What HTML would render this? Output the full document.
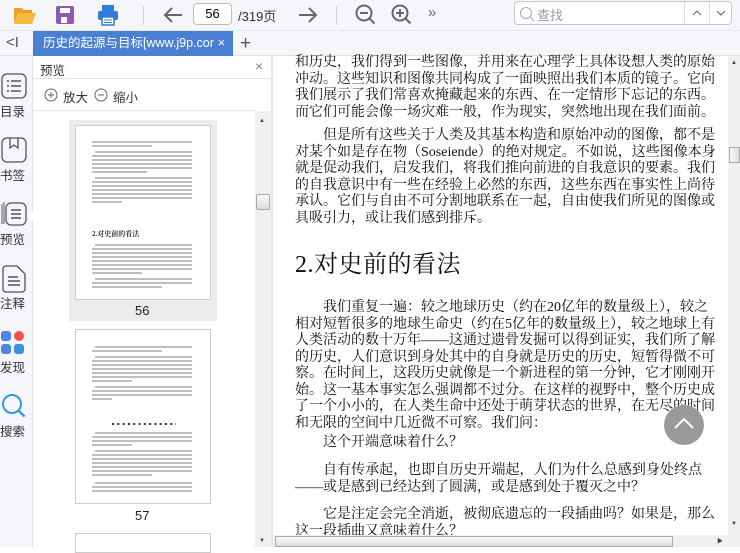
<!DOCTYPE html>
<html><head><meta charset="utf-8"><style>
*{margin:0;padding:0;box-sizing:border-box}
body{width:740px;height:547px;overflow:hidden;background:#fff;font-family:"Liberation Sans","Noto Sans CJK SC",sans-serif;position:relative}
.abs{position:absolute}
.tb{left:0;top:0;width:740px;height:31px;background:#f4f6f9;border-bottom:1px solid #e3e6ea}
.tabbar{left:0;top:31px;width:740px;height:25px;background:#f4f6f9;border-bottom:1px solid #dde0e4}
.tab{left:33px;top:31px;width:200px;height:25px;background:#4a80d4;color:#fff;font-size:12.5px;line-height:25px;padding-left:10px;white-space:nowrap;overflow:hidden}
.side{left:0;top:56px;width:33px;height:491px;background:#f4f6f9;border-right:1px solid #dcdfe3}
.prev{left:33px;top:56px;width:238px;height:491px;background:#fff}
.doc{font-family:"Liberation Serif","Noto Serif CJK SC",serif;font-size:14px;color:#111;position:absolute;left:295px;width:407px}
.l{height:16.5px;line-height:16.5px;white-space:nowrap;text-align:justify;text-align-last:justify}
.n{text-align-last:left}
.thumb{position:absolute;background:#fff;border:1px solid #ccc}
</style></head><body>
<div class="abs tb"></div>
<svg class="abs" style="left:13px;top:5px" width="24" height="20"><path d="M1 3h8l2 2h8v3H5L1 18z" fill="#e8a22b"/><path d="M5 8h18l-4 11H1z" fill="#f5b93b"/></svg>
<svg class="abs" style="left:55px;top:5px" width="20" height="20"><rect x="1" y="1" width="18" height="18" rx="2" fill="#8d5bb5"/><rect x="5" y="3" width="10" height="5" fill="#fff"/><rect x="6" y="12" width="6" height="6" fill="#fff"/></svg>
<svg class="abs" style="left:97px;top:4px" width="22" height="22"><rect x="5" y="1" width="12" height="6" fill="#2f7fd6"/><rect x="1" y="7" width="20" height="9" rx="2" fill="#2f7fd6"/><rect x="5" y="13" width="12" height="8" fill="#fff" stroke="#2f7fd6" stroke-width="1.5"/><line x1="7" y1="16" x2="15" y2="16" stroke="#2f7fd6"/><line x1="7" y1="18.5" x2="15" y2="18.5" stroke="#2f7fd6"/></svg>
<div class="abs" style="left:143px;top:6px;width:1px;height:19px;background:#d0d3d8"></div>
<svg class="abs" style="left:162px;top:5px" width="22" height="20"><path d="M20 10H3M10 3L3 10l7 7" stroke="#666" stroke-width="2" fill="none"/></svg>
<div class="abs" style="left:193px;top:3px;width:39px;height:22px;border:1px solid #bbb;border-radius:4px;background:#fff;font-size:13px;text-align:center;line-height:20px">56</div>
<div class="abs" style="left:238px;top:6px;font-size:13px;color:#333">/319页</div>
<svg class="abs" style="left:297px;top:5px" width="22" height="20"><path d="M2 10h17M12 3l7 7-7 7" stroke="#666" stroke-width="2" fill="none"/></svg>
<div class="abs" style="left:336px;top:6px;width:1px;height:19px;background:#d0d3d8"></div>
<svg class="abs" style="left:354px;top:3px" width="22" height="22"><circle cx="10" cy="10" r="7.5" stroke="#666" stroke-width="2" fill="none"/><path d="M6 10h8M15.5 15.5l5 5" stroke="#666" stroke-width="2"/></svg>
<svg class="abs" style="left:390px;top:3px" width="22" height="22"><circle cx="10" cy="10" r="7.5" stroke="#666" stroke-width="2" fill="none"/><path d="M6 10h8M10 6v8M15.5 15.5l5 5" stroke="#666" stroke-width="2"/></svg>
<div class="abs" style="left:428px;top:4px;font-size:15px;color:#666">»</div>
<div class="abs" style="left:514px;top:1px;width:218px;height:24px;border:1px solid #c4c8ce;border-radius:4px;background:#fff"></div>
<svg class="abs" style="left:519px;top:6px" width="16" height="16"><circle cx="7" cy="7" r="5.5" stroke="#aaa" fill="none"/><path d="M11 11l4 4" stroke="#aaa"/></svg>
<div class="abs" style="left:537px;top:5px;font-size:13px;color:#999">查找</div>
<div class="abs" style="left:684px;top:2px;width:1px;height:22px;background:#ddd"></div>
<div class="abs" style="left:709px;top:2px;width:1px;height:22px;background:#ddd"></div>
<svg class="abs" style="left:691px;top:9px" width="12" height="8"><path d="M2 6l4-4 4 4" stroke="#666" fill="none"/></svg>
<svg class="abs" style="left:715px;top:9px" width="12" height="8"><path d="M2 2l4 4 4-4" stroke="#666" fill="none"/></svg>

<div class="abs tabbar"></div>
<div class="abs" style="left:6px;top:34px;font-size:15px;color:#555">&lt;I</div>
<div class="abs tab">历史的起源与目标[www.j9p.cor <span style="position:absolute;right:8px">×</span></div>
<div class="abs" style="left:240px;top:31px;font-size:19px;color:#555;line-height:25px">+</div>

<div class="abs side"></div>
<svg class="abs" style="left:1px;top:73px" width="26" height="26"><rect x="1" y="1" width="24" height="24" rx="5" stroke="#555" stroke-width="1.3" fill="none"/><path d="M6 8h2M10 8h10M6 13h2M10 13h10M6 18h2M10 18h10" stroke="#555" stroke-width="1.5"/></svg>
<div class="abs" style="left:0;top:101px;font-size:12.5px;color:#333">目录</div>
<svg class="abs" style="left:1px;top:137px" width="26" height="26"><rect x="1" y="1" width="24" height="24" rx="5" stroke="#555" stroke-width="1.3" fill="none"/><path d="M9 1v10l4-3 4 3V1" stroke="#555" stroke-width="1.3" fill="none"/></svg>
<div class="abs" style="left:0;top:165px;font-size:12.5px;color:#333">书签</div>
<svg class="abs" style="left:1px;top:200px" width="28" height="28"><path d="M1 4v20M3 2v22" stroke="#555" fill="none"/><rect x="5" y="3" width="20" height="22" rx="5" stroke="#555" stroke-width="1.3" fill="none"/><path d="M10 10h10M10 14h10M10 18h10" stroke="#555" stroke-width="1.4"/></svg>
<div class="abs" style="left:0;top:229px;font-size:12.5px;color:#333">预览</div>
<div class="abs" style="left:27px;top:210px;width:0;height:0;border-top:6px solid transparent;border-bottom:6px solid transparent;border-right:6px solid #fff"></div>
<svg class="abs" style="left:1px;top:265px" width="26" height="28"><path d="M2 4a3 3 0 013-3h11l8 8v15a3 3 0 01-3 3H5a3 3 0 01-3-3z" stroke="#555" stroke-width="1.3" fill="none"/><path d="M7 12h10M7 16h12M7 20h12" stroke="#555" stroke-width="1.4"/></svg>
<div class="abs" style="left:0;top:293px;font-size:12.5px;color:#333">注释</div>
<div class="abs" style="left:1px;top:331px;width:10px;height:10px;border-radius:3px;background:#4a86e8"></div>
<div class="abs" style="left:14px;top:331px;width:10px;height:10px;border-radius:5px;background:#f0504f"></div>
<div class="abs" style="left:1px;top:344px;width:10px;height:10px;border-radius:3px;background:#4a86e8"></div>
<div class="abs" style="left:14px;top:344px;width:10px;height:10px;border-radius:3px;background:#3d8ee8"></div>
<div class="abs" style="left:0;top:357px;font-size:12.5px;color:#333">发现</div>
<svg class="abs" style="left:1px;top:393px" width="26" height="26"><circle cx="11" cy="11" r="9" stroke="#2f9be0" stroke-width="2" fill="none"/><path d="M17.5 17.5l6 6" stroke="#2f9be0" stroke-width="2.4"/></svg>
<div class="abs" style="left:0;top:421px;font-size:12.5px;color:#333">搜索</div>

<div class="abs prev"></div>
<div class="abs" style="left:40px;top:60px;font-size:12.5px;color:#333">预览</div>
<div class="abs" style="left:255px;top:58px;font-size:14px;color:#888">×</div>
<div class="abs" style="left:33px;top:78px;width:238px;height:1px;background:#e5e5e5"></div>
<svg class="abs" style="left:44px;top:88px" width="14" height="14"><circle cx="7" cy="7" r="6" stroke="#666" fill="none"/><path d="M4 7h6M7 4v6" stroke="#666"/></svg>
<div class="abs" style="left:63px;top:87px;font-size:12.5px;color:#333">放大</div>
<svg class="abs" style="left:94px;top:88px" width="14" height="14"><circle cx="7" cy="7" r="6" stroke="#666" fill="none"/><path d="M4 7h6" stroke="#666"/></svg>
<div class="abs" style="left:113px;top:87px;font-size:12.5px;color:#333">缩小</div>
<div class="abs" style="left:33px;top:110px;width:222px;height:1px;background:#e8e8e8"></div>
<div class="abs" style="left:69px;top:120px;width:148px;height:201px;background:#ececec"></div>
<div class="thumb" style="left:75px;top:125px;width:136px;height:175px"></div>
<div class="abs" style="left:135px;top:303px;font-size:13px;color:#222">56</div>
<div class="thumb" style="left:75px;top:329px;width:136px;height:175px"></div>
<div class="abs" style="left:135px;top:508px;font-size:13px;color:#222">57</div>
<div class="thumb" style="left:75px;top:533px;width:136px;height:20px"></div>
<svg class="abs" style="left:92px;top:140px" width="104" height="160">
<g stroke="#aaa" stroke-width="1.6">
<path d="M0 2h100M0 6h60M3 12h97M0 16h100M0 20h100M0 24h100M0 28h100M0 32h55M3 38h97M0 42h100M0 46h100M0 50h100M0 54h100M0 58h100M0 62h30M3 105h97M0 109h100M0 113h100M0 117h100M0 121h100M0 125h100M0 129h100M0 133h50M3 139h97M0 143h100M0 147h70"/>
</g>
<text x="0" y="96" font-size="7" font-family="Liberation Serif,Noto Serif CJK SC,serif" font-weight="bold" fill="#333">2.对史前的看法</text>
</svg>
<svg class="abs" style="left:92px;top:345px" width="104" height="155">
<g stroke="#aaa" stroke-width="1.6"><path d="M3 2h97M0 6h70M3 12h97M0 16h100M0 20h100M0 24h100M0 28h100M0 32h100M0 36h40M3 42h97M0 46h100M0 50h100M0 54h20M3 88h97M0 92h100M0 96h100M0 100h40M3 106h97M0 110h100M0 114h100M0 118h100M0 122h100M0 126h100M0 130h60M3 138h97M0 142h100M0 146h100"/></g>
<path d="M20 79h64" stroke="#333" stroke-width="2" stroke-dasharray="2 3.3"/>
</svg>
<div class="abs" style="left:255px;top:111px;width:16px;height:436px;background:#f0f0f0"></div>
<div class="abs" style="left:259px;top:118px;font-size:6px;color:#444">▲</div>
<div class="abs" style="left:256px;top:194px;width:14px;height:16px;border:1px solid #aaa;border-radius:2px;background:linear-gradient(#fafafa,#ddd)"></div>
<div class="abs" style="left:259px;top:538px;font-size:6px;color:#444">▼</div>
<div class="abs" style="left:271px;top:56px;width:2px;height:491px;background:#e6e6e6"></div>

<div class="doc" style="top:55px">
<div class="l">和历史，我们得到一些图像，并用来在心理学上具体设想人类的原始</div>
<div class="l">冲动。这些知识和图像共同构成了一面映照出我们本质的镜子。它向</div>
<div class="l">我们展示了我们常喜欢掩藏起来的东西、在一定情形下忘记的东西。</div>
<div class="l n">而它们可能会像一场灾难一般，作为现实，突然地出现在我们面前。</div>
</div>
<div class="doc" style="top:128px">
<div class="l" style="padding-left:28px">但是所有这些关于人类及其基本构造和原始冲动的图像，都不是</div>
<div class="l">对某个如是存在物（Soseiende）的绝对规定。不如说，这些图像本身</div>
<div class="l">就是促动我们，启发我们，将我们推向前进的自我意识的要素。我们</div>
<div class="l">的自我意识中有一些在经验上必然的东西，这些东西在事实性上尚待</div>
<div class="l">承认。它们与自由不可分割地联系在一起，自由使我们所见的图像或</div>
<div class="l n">具吸引力，或让我们感到排斥。</div>
</div>
<div class="abs" style="left:295px;top:244px;font-family:'Liberation Serif','Noto Serif CJK SC',serif;font-size:24px;color:#111;letter-spacing:0.5px">2.对史前的看法</div>
<div class="doc" style="top:300px">
<div class="l" style="padding-left:28px">我们重复一遍：较之地球历史（约在20亿年的数量级上），较之</div>
<div class="l">相对短暂很多的地球生命史（约在5亿年的数量级上），较之地球上有</div>
<div class="l">人类活动的数十万年——这通过遗骨发掘可以得到证实，我们所了解</div>
<div class="l">的历史，人们意识到身处其中的自身就是历史的历史，短暂得微不可</div>
<div class="l">察。在时间上，这段历史就像是一个新进程的第一分钟，它才刚刚开</div>
<div class="l">始。这一基本事实怎么强调都不过分。在这样的视野中，整个历史成</div>
<div class="l">了一个小小的，在人类生命中还处于萌芽状态的世界，在无尽的时间</div>
<div class="l n">和无限的空间中几近微不可察。我们问：</div>
</div>
<div class="doc" style="top:435px"><div class="l n" style="padding-left:28px">这个开端意味着什么？</div></div>
<div class="doc" style="top:463px">
<div class="l" style="padding-left:28px">自有传承起，也即自历史开端起，人们为什么总感到身处终点</div>
<div class="l n">——或是感到已经达到了圆满，或是感到处于覆灭之中？</div>
</div>
<div class="doc" style="top:507px">
<div class="l" style="padding-left:28px">它是注定会完全消逝，被彻底遗忘的一段插曲吗？如果是，那么</div>
<div class="l n">这一段插曲又意味着什么？</div>
</div>
<div class="abs" style="left:664px;top:405px;width:40px;height:40px;border-radius:50%;background:#9a9a9a"></div>
<svg class="abs" style="left:672px;top:415px" width="24" height="18"><path d="M3 13l9-9 9 9" stroke="#fff" stroke-width="2" fill="none"/></svg>

<div class="abs" style="left:728px;top:56px;width:12px;height:479px;background:#f0f0f0"></div>
<div class="abs" style="left:731px;top:60px;font-size:6px;color:#444">▲</div>
<div class="abs" style="left:729px;top:147px;width:11px;height:16px;border:1px solid #aaa;background:linear-gradient(90deg,#fafafa,#ddd)"></div>
<div class="abs" style="left:731px;top:521px;font-size:6px;color:#444">▼</div>
<div class="abs" style="left:273px;top:535px;width:467px;height:12px;background:#f0f0f0"></div>
<div class="abs" style="left:275px;top:536px;width:398px;height:11px;border:1px solid #aaa;background:linear-gradient(#fafafa,#ddd)"></div>
<div class="abs" style="left:717px;top:536px;font-size:6px;color:#444">▶</div>
</body></html>
